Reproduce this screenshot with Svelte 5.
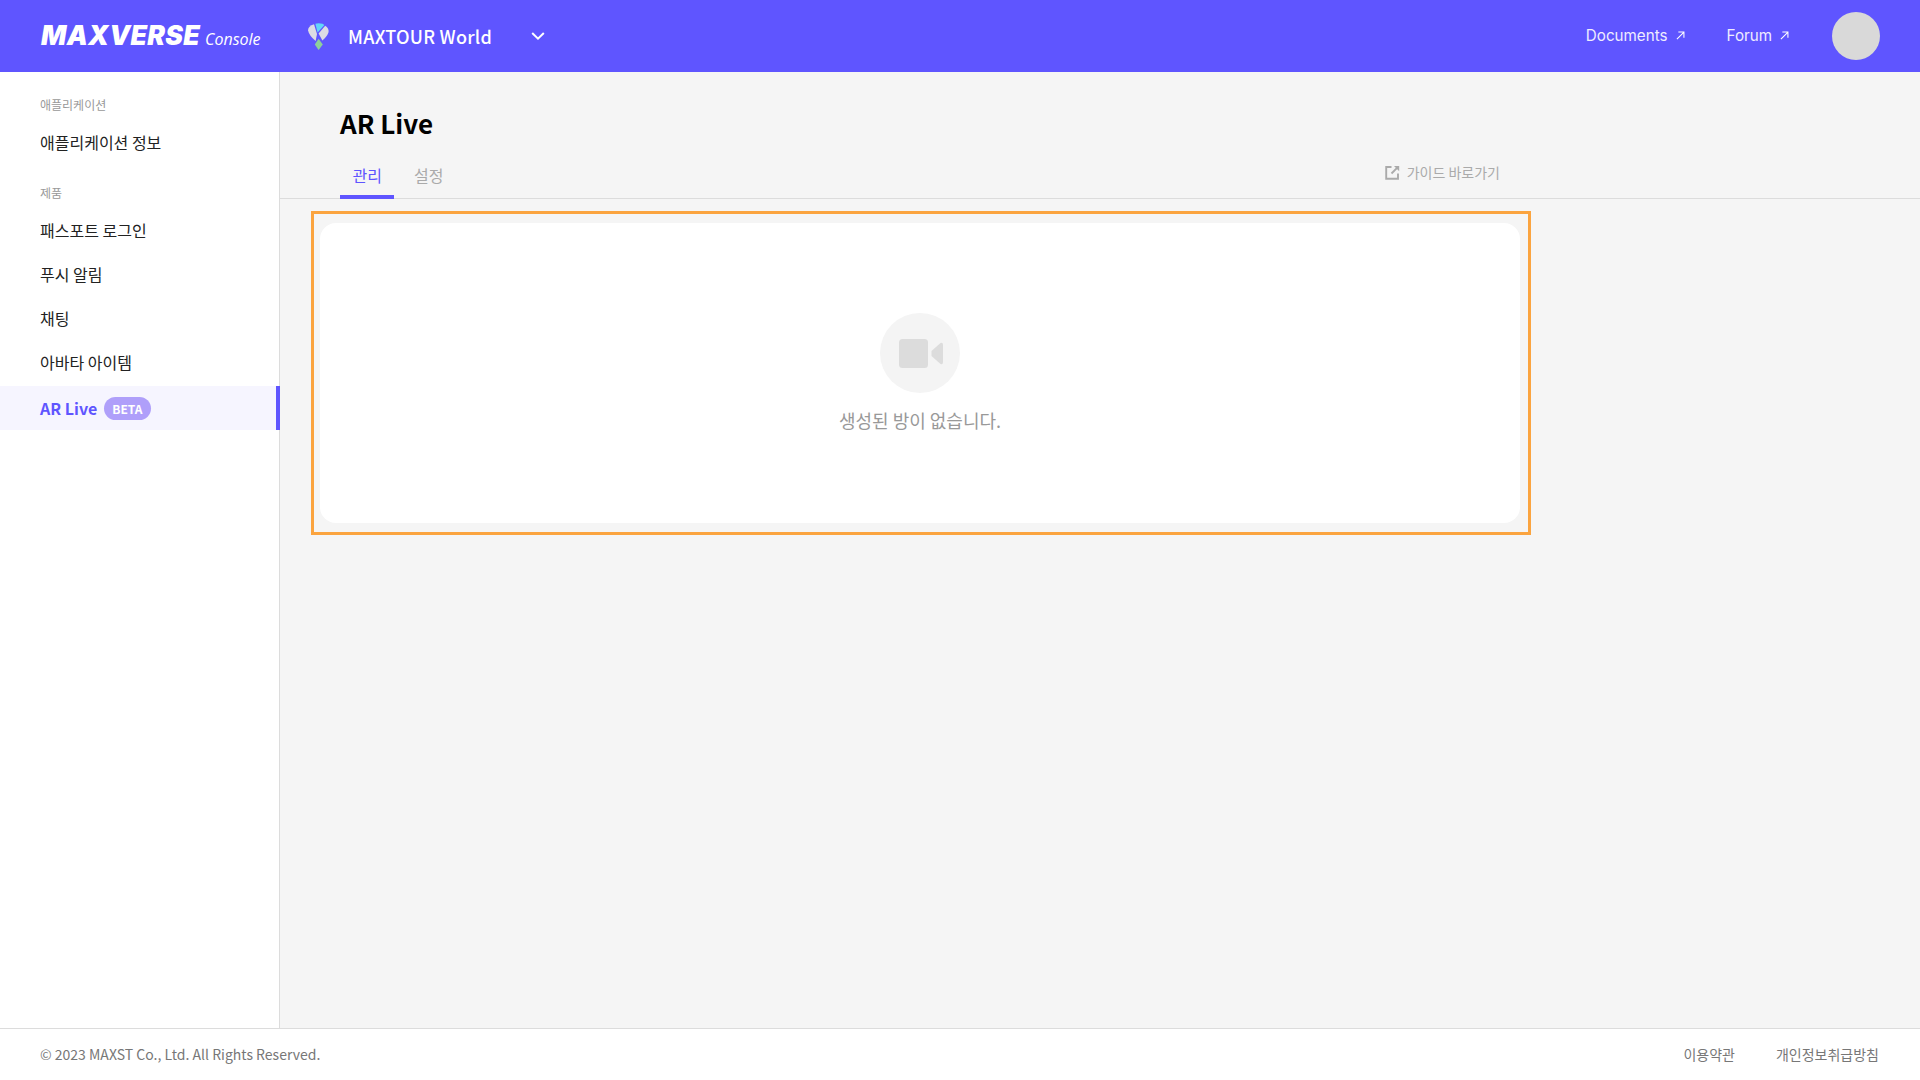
<script lang="ts">
  const products = ['패스포트 로그인', '푸시 알림', '채팅', '아바타 아이템'];
</script>

<div class="page">
  <header class="topbar">
    <div class="brand">
      <span class="logo">MAXVERSE</span>
      <span class="console">Console</span>
    </div>
    <div class="world">
      <svg class="pin" viewBox="0 0 21 27" width="21" height="27">
        <path d="M7.4 0.8 Q10.5 -0.2 14.5 0.8 L16.4 2 L9.6 9.4 Z" fill="#62d6fa" />
        <path d="M6 1.2 L9 11 L7.6 18 Q1 12.4 0.1 7.5 Q-0.2 3.2 6 1.2 Z" fill="#dcdce4" />
        <path d="M17.2 2.8 Q21 5.2 20.6 9 Q19.4 13.4 14.4 17.4 L10.6 10.6 Z" fill="#dcdce4" />
        <path d="M10.6 15.8 L14.8 21.4 L10.6 27 L6.8 21.4 Z" fill="#8ecf9b" />
      </svg>
      <span class="world-name">MAXTOUR World</span>
      <svg class="chevron" viewBox="0 0 14 8" width="14" height="8">
        <path d="M1.2 1 L7 6.6 L12.8 1" fill="none" stroke="#fff" stroke-width="2" />
      </svg>
    </div>
    <nav class="toplinks">
      <a class="toplink">
        Documents
        <svg viewBox="0 0 10 10" width="9" height="9">
          <path d="M1 9 L8.6 1.4 M2.6 1.2 H8.8 V7.4" fill="none" stroke="#fff" stroke-width="1.2" />
        </svg>
      </a>
      <a class="toplink">
        Forum
        <svg viewBox="0 0 10 10" width="9" height="9">
          <path d="M1 9 L8.6 1.4 M2.6 1.2 H8.8 V7.4" fill="none" stroke="#fff" stroke-width="1.2" />
        </svg>
      </a>
    </nav>
    <div class="avatar"></div>
  </header>

  <div class="middle">
    <aside class="sidebar">
      <div class="group">
        <div class="group-label">애플리케이션</div>
        <div class="item">애플리케이션 정보</div>
      </div>
      <div class="group">
        <div class="group-label">제품</div>
        {#each products as name}
          <div class="item">{name}</div>
        {/each}
        <div class="item active">
          <span>AR Live</span>
          <span class="beta">BETA</span>
        </div>
      </div>
    </aside>

    <main class="content">
      <div class="head">
        <h1>AR Live</h1>
        <div class="tabs">
          <div class="tab selected">관리</div>
          <div class="tab">설정</div>
          <a class="guide">
            <svg viewBox="0 0 15 15" width="15" height="15">
              <path d="M6.5 2 H1.2 V13.8 H13 V8.5" fill="none" stroke="#aaa" stroke-width="1.9" />
              <path d="M6.5 8.5 L12.6 2.4" fill="none" stroke="#aaa" stroke-width="1.9" />
              <path d="M9 1 H14.2 V6.2 Z" fill="#aaa" />
            </svg>
            가이드 바로가기
          </a>
        </div>
      </div>

      <section class="panel">
        <div class="highlight"></div>
        <div class="empty-icon">
          <svg viewBox="0 0 44 29" width="44" height="29">
            <rect x="0" y="0" width="29" height="29" rx="3.5" fill="#dcdcdc" />
            <path d="M32.5 12 L41.5 4 Q44 3 44 6 V23 Q44 26 41.5 25 L32.5 17 Z" fill="#dcdcdc" />
          </svg>
        </div>
        <p class="empty-text">생성된 방이 없습니다.</p>
      </section>
    </main>
  </div>

  <footer class="footer">
    <span class="copy">© 2023 MAXST Co., Ltd. All Rights Reserved.</span>
    <div class="footer-links">
      <a>이용약관</a>
      <a>개인정보취급방침</a>
    </div>
  </footer>
</div>

<style>
  :global(body) {
    margin: 0;
    font-family: 'Noto Sans CJK KR', 'Noto Sans', sans-serif;
  }

  .page {
    display: flex;
    flex-direction: column;
    height: 100vh;
    background: #f5f5f5;
  }

  .topbar {
    display: flex;
    align-items: center;
    flex: none;
    height: 72px;
    padding: 0 40px;
    background: #5f55ff;
    color: #fff;
  }

  .brand {
    display: flex;
    align-items: baseline;
    width: 268px;
    padding-left: 1px;
    box-sizing: border-box;
  }

  .logo {
    font-family: Inter, sans-serif;
    font-size: 26.5px;
    font-weight: 900;
    font-style: italic;
    letter-spacing: 0.3px;
    line-height: 1;
  }

  .console {
    margin-left: 5px;
    font-family: 'Open Sans', sans-serif;
    font-size: 16px;
    font-style: italic;
  }

  .world {
    display: flex;
    align-items: center;
  }

  .pin {
    margin-right: 19px;
  }

  .world-name {
    font-size: 18px;
    font-weight: 500;
    letter-spacing: 0.25px;
    line-height: 1;
    width: 183px;
  }

  .toplinks {
    display: flex;
    gap: 42px;
    margin-left: auto;
    margin-right: 43px;
    padding-bottom: 2px;
  }

  .toplink {
    display: flex;
    align-items: center;
    gap: 8px;
    font-family: Inter, sans-serif;
    font-size: 15.2px;
    color: #eeecff;
  }

  .avatar {
    width: 48px;
    height: 48px;
    border-radius: 50%;
    background: #d9d9d9;
  }

  .middle {
    display: flex;
    flex: 1;
    min-height: 0;
  }

  .sidebar {
    flex: none;
    width: 279px;
    padding-top: 21px;
    background: #fff;
    border-right: 1px solid #dcdcdc;
  }

  .group {
    margin-bottom: 17px;
  }

  .group-label {
    height: 24px;
    margin-bottom: 3px;
    padding-left: 40px;
    font-size: 12px;
    line-height: 24px;
    color: #999;
  }

  .item {
    display: flex;
    align-items: center;
    height: 44px;
    padding-left: 40px;
    font-size: 16px;
    color: #222;
  }

  .item.active {
    gap: 7px;
    position: relative;
    margin-top: 2px;
    margin-right: -1px;
    background: #f6f5ff;
    border-right: 4px solid #5f55ff;
    font-weight: 700;
    color: #5f55ff;
  }

  .beta {
    padding: 0 8px;
    height: 23px;
    border-radius: 12px;
    background: #af9ffa;
    font-size: 12px;
    line-height: 24px;
    font-weight: 700;
    color: #fff;
  }

  .content {
    flex: 1;
    min-width: 0;
  }

  .head {
    border-bottom: 1px solid #dcdcdc;
    padding: 30px 0 0 60px;
  }

  h1 {
    margin: 0 0 2px;
    height: 42px;
    font-size: 26px;
    font-weight: 700;
    line-height: 42px;
    color: #000;
  }

  .tabs {
    display: flex;
    position: relative;
    width: 1160px;
    height: 52px;
  }

  .tab {
    padding: 16.5px 12.5px 0;
    font-size: 16px;
    line-height: 24px;
    color: #aaa;
    margin-right: 7px;
  }

  .tab.selected {
    color: #5f55ff;
    border-bottom: 4px solid #5f55ff;
    box-sizing: border-box;
    height: 53px;
  }

  .guide {
    display: flex;
    align-items: center;
    gap: 7px;
    margin-left: auto;
    height: 24px;
    margin-top: 14px;
    font-size: 14px;
    color: #aaa;
  }

  .panel {
    position: relative;
    display: flex;
    flex-direction: column;
    align-items: center;
    box-sizing: border-box;
    width: 1200px;
    height: 300px;
    margin: 24px 0 0 40px;
    padding-top: 90px;
    background: #fff;
    border-radius: 16px;
  }

  .highlight {
    position: absolute;
    top: -12px;
    left: -9px;
    right: -11px;
    bottom: -12px;
    border: 3px solid #fba43f;
    pointer-events: none;
  }

  .empty-icon {
    display: flex;
    align-items: center;
    justify-content: center;
    width: 80px;
    height: 80px;
    border-radius: 50%;
    background: #f4f4f4;
  }

  .empty-icon svg {
    margin-left: 2px;
  }

  .empty-text {
    margin: 14px 0 0;
    font-size: 18px;
    line-height: 27px;
    color: #999;
  }

  .footer {
    display: flex;
    align-items: center;
    justify-content: space-between;
    flex: none;
    box-sizing: border-box;
    height: 52px;
    padding: 0 41px 2px 40px;
    background: #fff;
    border-top: 1px solid #dcdcdc;
    font-size: 14px;
    color: #777;
  }

  .footer-links {
    display: flex;
    gap: 41px;
    font-size: 14px;
  }
</style>
